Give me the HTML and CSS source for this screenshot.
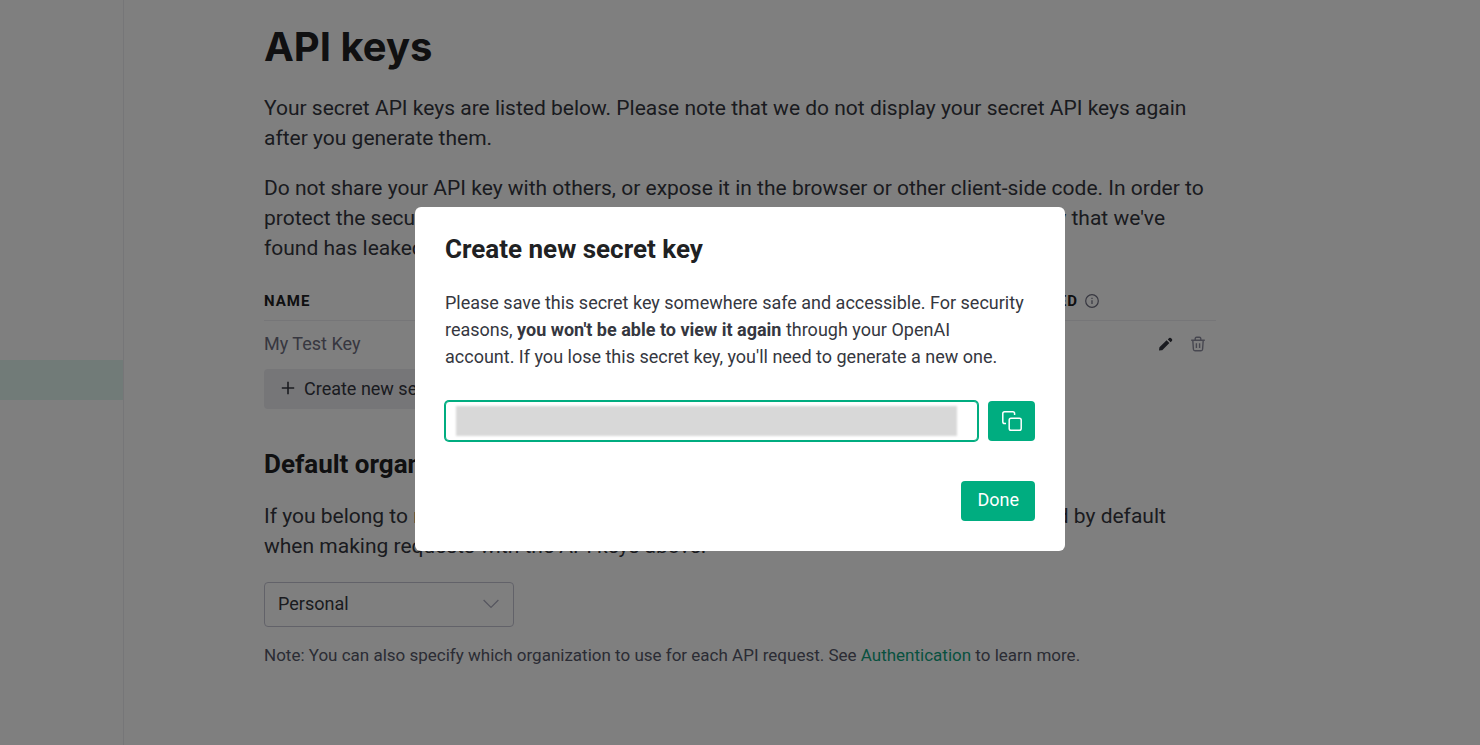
FILE: index.html
```html
<!DOCTYPE html>
<html lang="en">
<head>
<meta charset="utf-8">
<meta name="viewport" content="width=device-width, initial-scale=1">
<title>API keys</title>
<link rel="stylesheet" href="styles.css">
</head>
<body>
<div class="app">
  <nav class="sidebar" aria-label="Account">
    <a class="sidebar-item" href="#api-keys" aria-label="API keys"></a>
  </nav>
  <main class="main">
    <div class="content">
      <h1 class="title">API keys</h1>
      <p class="text">Your secret API keys are listed below. Please note that we do not display your secret API keys again after you generate them.</p>
      <p class="text">Do not share your API key with others, or expose it in the browser or other client-side code. In order to protect the security of your account, OpenAI may also automatically rotate any API key that we've found has leaked publicly.</p>

      <table class="keys">
        <thead>
          <tr>
            <th class="col-name">Name</th>
            <th class="col-key">Key</th>
            <th class="col-created">Created</th>
            <th class="col-used"><span class="used">Last used
              <svg class="info" viewBox="0 0 14 14" aria-hidden="true"><circle cx="7" cy="7" r="6.3"/><path d="M7 6.2v3.8M7 3.8v1.2"/></svg></span></th>
            <th class="col-actions" aria-label="Actions"></th>
          </tr>
        </thead>
        <tbody>
          <tr>
            <td>My Test Key</td>
            <td></td>
            <td></td>
            <td></td>
            <td>
              <div class="actions">
                <button class="icon-button" type="button" aria-label="Edit key">
                  <svg class="icon edit" viewBox="0 0 16 16" aria-hidden="true"><path d="M1 14.500l.3-2.600q.1-.5.4-.8L8.600 4.200l2.800 2.800-6.900 6.900q-.3.3-.8.400zM9.800 3.400l1.300-1.300a1.300 1.300 0 0 1 1.800 0l1 1a1.300 1.300 0 0 1 0 1.800L12.600 6.200z"/></svg>
                </button>
                <button class="icon-button" type="button" aria-label="Delete key">
                  <svg class="icon delete" viewBox="0 0 16 16" aria-hidden="true"><path d="M1.200 4.200h13.600M5.200 4V2.600q0-1.400 1.400-1.400h2.800q1.400 0 1.400 1.400V4M2.800 4.400l.6 8.900q.1 1.500 1.600 1.500h6q1.500 0 1.600-1.500l.6-8.900M6.400 7.200v4.800M9.600 7.200v4.800"/></svg>
                </button>
              </div>
            </td>
          </tr>
        </tbody>
      </table>
      <button class="create" type="button">
        <svg class="plus" viewBox="0 0 14 14" aria-hidden="true"><path d="M7 .8v12.4M.8 7h12.4"/></svg>
        Create new secret key
      </button>

      <h2 class="subtitle">Default organization</h2>
      <p class="text" id="org-help">If you belong to multiple organizations, this setting controls which organization is used by default when making requests with the API keys above.</p>
      <div class="select-box">
        <select class="select" aria-label="Default organization" aria-describedby="org-help">
          <option>Personal</option>
        </select>
        <svg class="chevron" viewBox="0 0 16 10" aria-hidden="true"><path d="M.6 1l7.4 7.4L15.4 1"/></svg>
      </div>
      <p class="note">Note: You can also specify which organization to use for each API request. See <a class="link" href="#authentication">Authentication</a> to learn more.</p>
    </div>
  </main>
</div>

<div class="overlay">
  <section class="modal" role="dialog" aria-modal="true" aria-labelledby="modal-title">
    <h2 class="modal-title" id="modal-title">Create new secret key</h2>
    <p class="modal-text">Please save this secret key somewhere safe and accessible. For security reasons, <strong>you won't be able to view it again</strong> through your OpenAI account.&nbsp;If you lose this secret key, you'll need to generate a new one.</p>
    <div class="key-row">
      <div class="key-box">
        <input class="key-input" type="text" readonly aria-label="Secret key">
        <span class="key-mask"></span>
      </div>
      <button class="primary copy" type="button" aria-label="Copy key">
        <svg class="copy-icon" viewBox="0 0 20 20" aria-hidden="true"><rect x="7.200" y="7.200" width="12" height="12" rx="1.800"/><path d="M4 12.600H2.600q-1.800 0-1.800-1.800V2.600Q.8.8 2.600.8h8.200q1.800 0 1.800 1.800V4"/></svg>
      </button>
    </div>
    <div class="modal-footer">
      <button class="primary done" type="button">Done</button>
    </div>
  </section>
</div>
</body>
</html>
```
FILE: styles.css
```css
* {
  box-sizing: border-box;
}

body {
  margin: 0;
  background: #fff;
  color: #353740;
  font-family: Roboto, "Liberation Sans", sans-serif;
  font-size: 18px;
}

h1, h2, p {
  margin: 0;
}

button, input, select {
  margin: 0;
  font: inherit;
}

.app {
  display: flex;
  min-height: 100vh;
}

.sidebar {
  flex: 0 0 124px;
  padding-top: 360px;
  border-right: 1px solid #ececf1;
}

.sidebar-item {
  display: block;
  height: 40px;
  background: #e3f6f1;
}

.main {
  flex: 1;
  padding: 22px 140px 40px;
}

.content {
  max-width: 952px;
}

.title {
  margin-bottom: 21px;
  color: #202123;
  font-family: Inter, "Liberation Sans", sans-serif;
  font-size: 40px;
  font-weight: 700;
  line-height: 50px;
}

.text {
  margin-bottom: 20px;
  font-size: 21px;
  line-height: 30px;
}

.keys {
  width: 100%;
  border-collapse: collapse;
  table-layout: fixed;
}

.keys th {
  height: 37px;
  padding: 0;
  border-bottom: 1px solid #ececf1;
  color: #202123;
  font-size: 15px;
  font-weight: 700;
  letter-spacing: 1px;
  text-align: left;
  text-transform: uppercase;
}

.keys td {
  height: 49px;
  padding: 0 0 2px;
  color: #6e6e80;
}

.col-name {
  width: 26%;
}

.col-key,
.col-created {
  width: 25%;
}

.col-used {
  width: 15%;
}

.used {
  display: flex;
  align-items: center;
  gap: 7px;
  padding-left: 4px;
}

.info {
  width: 14px;
  height: 14px;
  fill: none;
  stroke: #6e6e80;
  stroke-width: 1.2;
}

.actions {
  display: flex;
  justify-content: flex-end;
  gap: 16px;
  padding-right: 10px;
}

.icon-button {
  display: flex;
  padding: 0;
  border: 0;
  background: none;
}

.icon {
  width: 16px;
  height: 16px;
}

.edit {
  fill: #353740;
}

.delete {
  fill: none;
  stroke: #8e8ea0;
  stroke-width: 1.4;
}

.create {
  display: flex;
  align-items: center;
  gap: 9px;
  height: 40px;
  padding: 0 17px 2px;
  border: 0;
  border-radius: 4px;
  background: #ececf1;
  color: #353740;
}

.plus {
  width: 14px;
  height: 14px;
  stroke: #353740;
  stroke-width: 1.6;
}

.subtitle {
  margin: 40px 0 22px;
  color: #202123;
  font-size: 26px;
  line-height: 30px;
}

.select-box {
  position: relative;
  width: 250px;
  margin-top: 21px;
}

.select {
  width: 100%;
  height: 45px;
  padding: 0 40px 3px 13px;
  border: 1px solid #c5c5d2;
  border-radius: 4px;
  background: #fff;
  color: #353740;
  appearance: none;
}

.chevron {
  position: absolute;
  top: 17px;
  right: 15px;
  width: 16px;
  height: 10px;
  fill: none;
  stroke: #acacbe;
  stroke-width: 1.3;
  pointer-events: none;
}

.note {
  margin-top: 16px;
  color: #565869;
  font-size: 17px;
  line-height: 24px;
}

.link {
  color: #10a37f;
  text-decoration: none;
}

.overlay {
  position: fixed;
  inset: 0;
  display: flex;
  align-items: center;
  justify-content: center;
  padding-top: 13px;
  background: rgba(0, 0, 0, .5);
}

.modal {
  width: 650px;
  max-width: 100%;
  padding: 30px;
  border-radius: 6px;
  background: #fff;
}

.modal-title {
  margin-bottom: 28px;
  color: #202123;
  font-size: 26px;
  line-height: 24px;
}

.modal-text {
  margin-bottom: 31px;
  font-size: 18px;
  line-height: 27px;
}

.key-row {
  display: flex;
  align-items: center;
  gap: 10px;
}

.key-box {
  position: relative;
  flex: 1;
}

.key-input {
  display: block;
  width: 100%;
  height: 40px;
  padding: 0 10px;
  border: 1px solid #00ad80;
  border-radius: 4px;
  outline: 0;
  box-shadow: 0 0 0 1px #00ad80;
}

.key-mask {
  position: absolute;
  inset: 5px 21px 5px 11px;
  background: #d8d8d8;
  filter: blur(1px);
}

.primary {
  display: flex;
  align-items: center;
  justify-content: center;
  height: 40px;
  padding: 0 16px;
  border: 0;
  border-radius: 4px;
  background: #00ad80;
  color: #fff;
}

.copy {
  width: 47px;
  padding: 0;
}

.copy-icon {
  width: 20px;
  height: 20px;
  fill: none;
  stroke: #fff;
  stroke-width: 1.5;
}

.modal-footer {
  display: flex;
  justify-content: flex-end;
  margin-top: 40px;
}

.done {
  padding-bottom: 3px;
}
```
